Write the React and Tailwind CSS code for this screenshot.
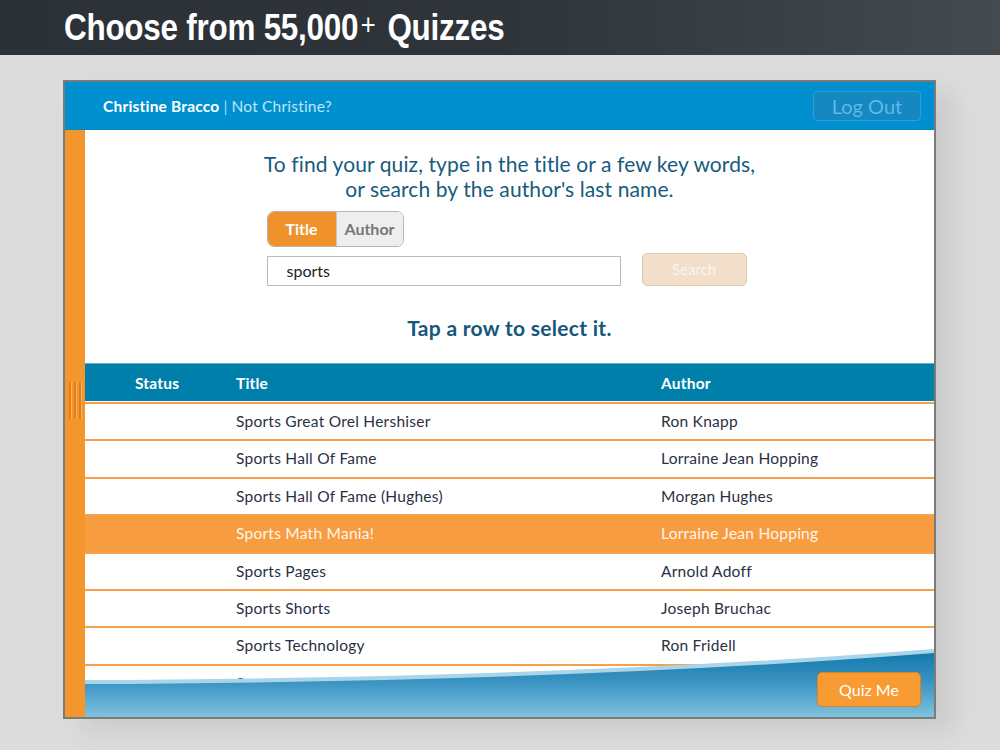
import React from 'react'

const rows = [
  { title: 'Sports Great Orel Hershiser', author: 'Ron Knapp' },
  { title: 'Sports Hall Of Fame', author: 'Lorraine Jean Hopping' },
  { title: 'Sports Hall Of Fame (Hughes)', author: 'Morgan Hughes' },
  { title: 'Sports Math Mania!', author: 'Lorraine Jean Hopping', active: true },
  { title: 'Sports Pages', author: 'Arnold Adoff' },
  { title: 'Sports Shorts', author: 'Joseph Bruchac' },
  { title: 'Sports Technology', author: 'Ron Fridell' },
  { title: 'Sports! Sports! Sports!', author: 'Marjorie Eberts' },
]

function Wave() {
  return (
    <svg className="absolute left-0 bottom-0" width="849" height="68" viewBox="0 0 849 68" preserveAspectRatio="none">
      <defs>
        <linearGradient id="wv" x1="0" y1="0" x2="0" y2="1">
          <stop offset="0" stopColor="#1479ad" />
          <stop offset="0.45" stopColor="#3a93c2" />
          <stop offset="1" stopColor="#7fc2de" />
        </linearGradient>
      </defs>
      <path d="M0,31 Q480,29 849,0 L849,68 L0,68 Z" fill="#a9d5ea" />
      <path d="M0,35 Q480,33 849,4 L849,68 L0,68 Z" fill="url(#wv)" />
    </svg>
  )
}

export default function App() {
  return (
    <div className="w-[1000px] h-[750px] bg-[#dcdcdc] overflow-hidden" style={{ fontFamily: 'Lato, "Open Sans", sans-serif' }}>
      {/* Title bar */}
      <div className="h-[55px] bg-gradient-to-r from-[#2b3137] via-[#2e343a] to-[#434a50] flex items-center pl-[64px]">
        <h1
          className="inline-block origin-left scale-x-[0.85] whitespace-nowrap text-white text-[37px] font-bold tracking-[-0.3px] leading-none"
          style={{ fontFamily: '"Liberation Sans", Arial, sans-serif' }}
        >
          Choose from 55,000<sup className="font-normal text-[30px] relative -top-[5px] ml-[3px] mr-[4px]">+</sup> Quizzes
        </h1>
      </div>

      {/* Device frame */}
      <div className="ml-[63px] mt-[25px] w-[873px] h-[639px] border-2 border-[#7b7b7b] flex flex-col bg-white shadow-[18px_12px_24px_rgba(0,0,0,0.08)]">
        {/* Blue header */}
        <div className="h-[48px] bg-[#0090d0] border-b border-[#0c86b0] flex items-center justify-between pl-[38px] pr-[13px]">
          <div className="text-[15.5px] text-white tracking-[0.2px] pt-[3px]">
            <span className="font-bold">Christine Bracco</span>
            <span className="text-[#a8d8f0] mx-[4px]">|</span>
            <span className="text-[#bfe4f6]">Not Christine?</span>
          </div>
          <button className="w-[108px] h-[30px] rounded-[4px] border border-[#2aa0d8] bg-[#1588c2] text-[#5cb9e8] text-[20px] leading-none">
            Log Out
          </button>
        </div>

        <div className="flex flex-1 min-h-0">
          {/* Orange side strip */}
          <div className="w-[20px] bg-[#f2962d] flex flex-col items-center pt-[252px]">
            <div className="flex gap-[3px] h-[37px]">
              <div className="w-[2px] bg-[#e57e12] shadow-[1px_0_0_#f7b264]" />
              <div className="w-[2px] bg-[#e57e12] shadow-[1px_0_0_#f7b264]" />
              <div className="w-[2px] bg-[#e57e12] shadow-[1px_0_0_#f7b264]" />
            </div>
          </div>

          {/* Content */}
          <div className="relative flex-1 overflow-hidden bg-white">
            <div className="flex flex-col items-center pt-[21px]">
              <p className="text-[21px] leading-[25px] text-[#175b7d] text-center tracking-[0.1px]">
                To find your quiz, type in the title or a few key words,
                <br />
                or search by the author's last name.
              </p>
              <div className="w-[480px] mt-[10px] -ml-[6px]">
                <div className="flex w-[137px] h-[36px] rounded-[7px] border border-[#b5b5b5] overflow-hidden text-[16px] font-bold">
                  <div className="w-[68px] bg-[#f0922b] text-white flex items-center justify-center">Title</div>
                  <div className="flex-1 bg-[#eeeeee] text-[#777777] flex items-center justify-center border-l border-[#c8c8c8]">Author</div>
                </div>
                <div className="flex items-center mt-[9px] gap-[21px]">
                  <div className="w-[355px] h-[30px] border border-[#bcbcbc] flex items-center pl-[19px] text-[16px] text-[#222]">
                    sports
                  </div>
                  <button className="w-[105px] h-[33px] mt-[-4px] rounded-[5px] border border-[#e2c9a9] bg-[#f1dfcb] text-[#fbf4ec] text-[15px]">
                    Search
                  </button>
                </div>
              </div>
              <p className="mt-[29px] text-[21px] font-bold text-[#14577b] leading-[25px] tracking-[0.3px]">Tap a row to select it.</p>
            </div>

            {/* Table */}
            <div className="mt-[23px]">
              <div className="h-[38px] bg-[#007fab] border-t border-[#5fb0cf] flex items-center text-white text-[15.5px] font-bold tracking-[0.2px] pt-[2px]">
                <div className="w-[151px] pl-[50px]">Status</div>
                <div className="w-[425px]">Title</div>
                <div>Author</div>
              </div>
              <div className="h-[1px] bg-white" />
              {rows.map((r) => (
                <div
                  key={r.title}
                  className={
                    'h-[37.4px] border-t-2 border-[#f7a04a] flex items-center text-[15.5px] tracking-[0.25px] ' +
                    (r.active ? 'bg-[#f79c40] text-[#fff6ea]' : 'bg-white text-[#2b2f45]')
                  }
                >
                  <div className="w-[151px]" />
                  <div className="w-[425px]">{r.title}</div>
                  <div>{r.author}</div>
                </div>
              ))}
            </div>

            <Wave />
            <button className="absolute right-[13px] bottom-[10px] w-[104px] h-[35px] rounded-[5px] bg-[#f89b33] border border-[#d8832a] text-white text-[16px]">
              Quiz Me
            </button>
          </div>
        </div>
      </div>
    </div>
  )
}
